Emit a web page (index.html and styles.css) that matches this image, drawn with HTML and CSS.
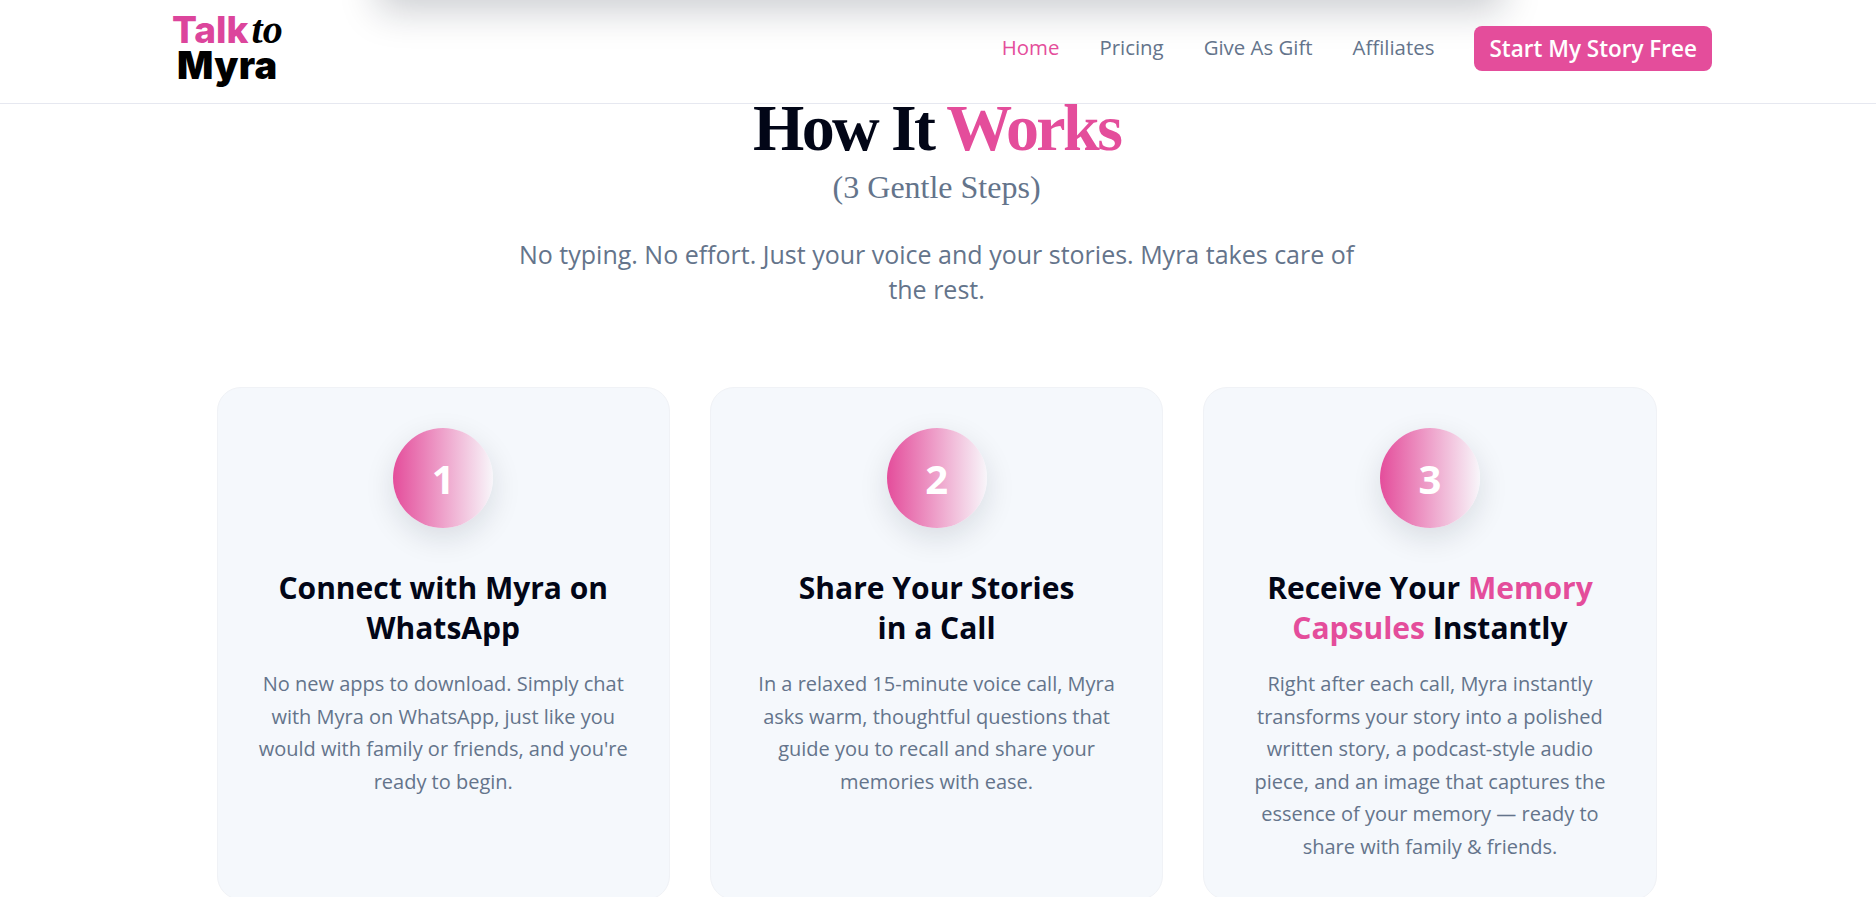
FILE: index.html
```html
<!DOCTYPE html>
<html lang="en">
<head>
  <meta charset="UTF-8">
  <title>Talk to Myra</title>
  <link rel="stylesheet" href="styles.css">
</head>
<body>
  <header class="site-header">
    <div class="header-shadow"></div>
    <div class="header-inner">
      <a class="logo" href="#">
        <span class="logo-top"><span class="logo-talk">Talk</span><span class="logo-to">to</span></span>
        <span class="logo-myra">Myra</span>
      </a>
      <nav class="nav">
        <a class="nav-link active" href="#">Home</a>
        <a class="nav-link" href="#">Pricing</a>
        <a class="nav-link" href="#">Give As Gift</a>
        <a class="nav-link" href="#">Affiliates</a>
        <a class="nav-cta" href="#">Start My Story Free</a>
      </nav>
    </div>
  </header>

  <section class="how">
    <h2 class="how-title">How It <span class="pink">Works</span></h2>
    <p class="how-sub">(3 Gentle Steps)</p>
    <p class="how-lead">No typing. No effort. Just your voice and your stories. Myra takes care of the rest.</p>

    <div class="steps">
      <article class="step">
        <div class="step-num">1</div>
        <h3 class="step-title">Connect with Myra on WhatsApp</h3>
        <p class="step-text">No new apps to download. Simply chat with Myra on WhatsApp, just like you would with family or friends, and you're ready to begin.</p>
      </article>
      <article class="step">
        <div class="step-num">2</div>
        <h3 class="step-title">Share Your Stories<br>in a Call</h3>
        <p class="step-text">In a relaxed 15-minute voice call, Myra asks warm, thoughtful questions that guide you to recall and share your memories with ease.</p>
      </article>
      <article class="step">
        <div class="step-num">3</div>
        <h3 class="step-title">Receive Your <span class="pink">Memory Capsules</span> Instantly</h3>
        <p class="step-text">Right after each call, Myra instantly transforms your story into a polished written story, a podcast-style audio piece, and an image that captures the essence of your memory — ready to share with family &amp; friends.</p>
      </article>
    </div>
  </section>
</body>
</html>
```

FILE: styles.css
```css
* {
  box-sizing: border-box;
}

body {
  margin: 0;
  height: 897px;
  overflow: hidden;
  background: #fff;
  color: #020617;
  font-family: "Open Sans", sans-serif;
}

a {
  text-decoration: none;
}

.pink {
  color: #e44d9b;
}

/* header */
.site-header {
  position: relative;
  height: 104px;
  background: #fff;
  border-bottom: 1px solid #e6e8f0;
  overflow: hidden;
}

.header-shadow {
  position: absolute;
  left: 378px;
  top: -100px;
  width: 1124px;
  height: 100px;
  box-shadow: 0 10px 38px rgba(15, 23, 42, 0.22);
}

.header-inner {
  position: relative;
  display: flex;
  align-items: center;
  justify-content: space-between;
  height: 100%;
  padding: 0 164px 7px 172px;
}

.logo {
  display: flex;
  flex-direction: column;
  align-items: center;
  font-family: "Inter", sans-serif;
  font-weight: 800;
  margin-top: 1px;
}

.logo-top {
  display: flex;
  align-items: baseline;
  height: 32px;
  line-height: 32px;
}

.logo-talk {
  color: #dc459c;
  font-size: 37px;
}

.logo-to {
  color: #000;
  font-family: "Liberation Serif", serif;
  font-style: italic;
  font-weight: 700;
  font-size: 40px;
  margin-left: 3px;
}

.logo-myra {
  color: #000;
  font-size: 38px;
  font-weight: 900;
  line-height: 38px;
  letter-spacing: 0.3px;
}

.nav {
  display: flex;
  align-items: center;
  gap: 40px;
}

.nav-link {
  color: #64748b;
  font-size: 20.4px;
  font-weight: 500;
  margin-bottom: 2px;
}

.nav-link.active {
  color: #e44d9b;
}

.nav-cta {
  background: #e44d9b;
  color: #fff;
  font-size: 22.5px;
  font-weight: 600;
  height: 45px;
  display: flex;
  align-items: center;
  padding: 0 15px;
  border-radius: 8px;
}

/* how it works */
.how {
  width: 1440px;
  margin: -12px 0 0 216.6px;
  text-align: center;
}

.how-title {
  margin: 0;
  font-family: "Liberation Serif", serif;
  font-weight: 700;
  font-size: 66px;
  line-height: 72px;
  letter-spacing: -2.6px;
}

.how-sub {
  margin: -1px 0 0;
  font-family: "Liberation Serif", serif;
  font-size: 32px;
  line-height: 48px;
  color: #64748b;
}

.how-lead {
  width: 860px;
  margin: 26px auto 0;
  font-size: 25px;
  line-height: 35px;
  color: #64748b;
}

.steps {
  display: grid;
  grid-template-columns: repeat(3, 1fr);
  gap: 40px;
  margin-top: 80px;
}

.step {
  height: 513px;
  padding: 40px;
  background: #f5f8fc;
  border: 1px solid #f0f2f6;
  border-radius: 24px;
}

.step-num {
  width: 100px;
  height: 100px;
  margin: 0 auto 40px;
  display: flex;
  align-items: center;
  justify-content: center;
  border-radius: 50%;
  background: linear-gradient(90deg, #e44d9b, #f8f6fa);
  box-shadow: 0 10px 30px rgba(15, 23, 42, 0.12);
  color: #fff;
  font-size: 40px;
  font-weight: 700;
}

.step-title {
  margin: 0 0 20px;
  font-size: 30px;
  line-height: 40px;
  font-weight: 700;
}

.step-text {
  margin: 0;
  font-size: 20px;
  line-height: 32.5px;
  color: #64748b;
}
```
